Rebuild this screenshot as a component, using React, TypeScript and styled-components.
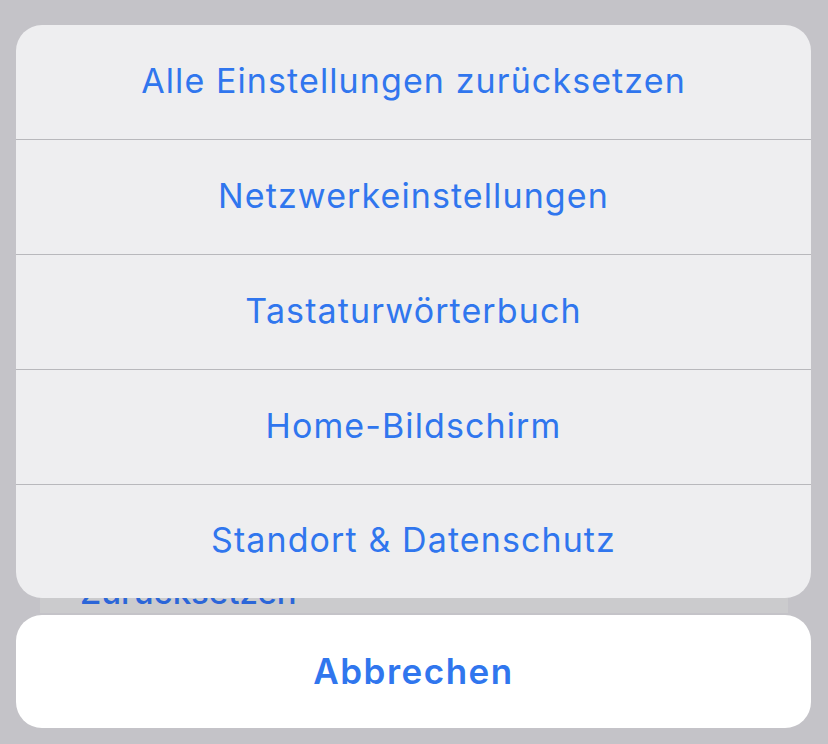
import styled, { createGlobalStyle } from 'styled-components';

const GlobalStyle = createGlobalStyle`
  html, body {
    margin: 0;
    padding: 0;
    background: #c4c3c8;
  }
  * {
    box-sizing: border-box;
  }
`;

const Screen = styled.div`
  position: relative;
  width: 828px;
  height: 744px;
  overflow: hidden;
  background: #c4c3c8;
  font-family: Inter, 'Noto Sans', sans-serif;
`;

const Backdrop = styled.div`
  display: flex;
  flex-direction: column;
  padding: 520px 40px 0;
`;

const BackCard = styled.div`
  background: #cbcbcd;
  height: 93px;
  padding: 52px 40px 0;
  font-size: 33px;
  line-height: 40px;
  font-weight: 500;
  color: #2b66d8;
`;

const Sheet = styled.div`
  position: absolute;
  inset: 0;
  display: flex;
  flex-direction: column;
  gap: 17px;
  padding: 25px 17px 0 16px;
`;

const Group = styled.div`
  display: flex;
  flex-direction: column;
  background: #eeeef0;
  border-radius: 26px;
  overflow: hidden;
`;

const Action = styled.div<{ $last?: boolean }>`
  height: ${p => (p.$last ? 113 : 115)}px;
  padding-bottom: 4px;
  display: flex;
  align-items: center;
  justify-content: center;
  border-bottom: ${p => (p.$last ? 'none' : '1px solid #b8b8bc')};
  color: #3076ee;
  font-size: 34px;
  letter-spacing: 1.1px;
`;

const Cancel = styled.div`
  height: 113px;
  padding-bottom: 2px;
  display: flex;
  align-items: center;
  justify-content: center;
  background: #ffffff;
  border-radius: 26px;
  color: #3076ee;
  font-size: 35px;
  font-weight: 600;
  letter-spacing: 1.5px;
`;

const actions = [
  'Alle Einstellungen zurücksetzen',
  'Netzwerkeinstellungen',
  'Tastaturwörterbuch',
  'Home-Bildschirm',
  'Standort & Datenschutz',
];

export default function App() {
  return (
    <>
      <GlobalStyle />
      <Screen>
        <Backdrop>
          <BackCard>Zurücksetzen</BackCard>
        </Backdrop>
        <Sheet>
          <Group>
            {actions.map((a, i) => (
              <Action key={a} $last={i === actions.length - 1}>
                {a}
              </Action>
            ))}
          </Group>
          <Cancel>Abbrechen</Cancel>
        </Sheet>
      </Screen>
    </>
  );
}
